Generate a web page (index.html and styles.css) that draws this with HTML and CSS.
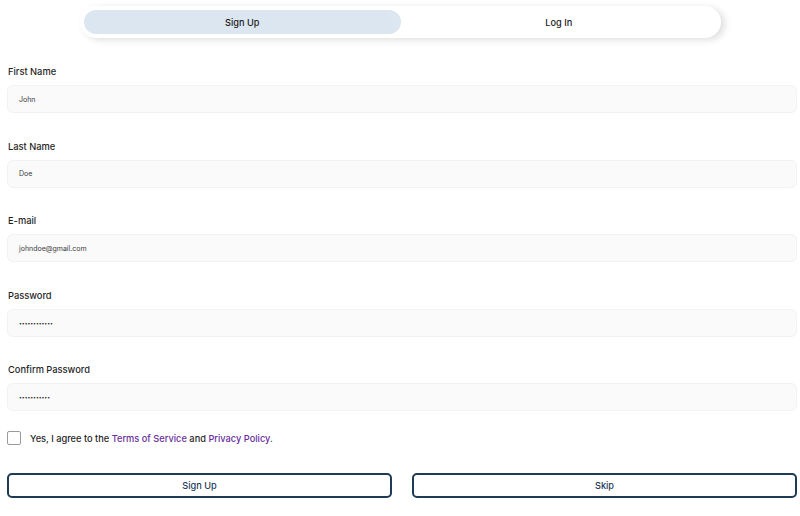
FILE: index.html
```html
<!DOCTYPE html>
<html lang="en">
<head>
<meta charset="utf-8">
<title>Sign Up</title>
<link rel="stylesheet" href="styles.css">
</head>
<body>
<div class="page">
  <div class="tabs">
    <div class="tab active">Sign Up</div>
    <div class="tab">Log In</div>
  </div>
  <form class="form">
    <div class="field">
      <label class="label">First Name</label>
      <div class="input">John</div>
    </div>
    <div class="field">
      <label class="label">Last Name</label>
      <div class="input">Doe</div>
    </div>
    <div class="field">
      <label class="label">E-mail</label>
      <div class="input">johndoe@gmail.com</div>
    </div>
    <div class="field">
      <label class="label">Password</label>
      <div class="input dots">••••••••••••</div>
    </div>
    <div class="field">
      <label class="label">Confirm Password</label>
      <div class="input dots">•••••••••••</div>
    </div>
    <div class="agree">
      <span class="checkbox"></span>
      <span>Yes, I agree to the <a class="link">Terms of Service</a> and <a class="link">Privacy Policy</a>.</span>
    </div>
    <div class="buttons">
      <div class="btn">Sign Up</div>
      <div class="btn">Skip</div>
    </div>
  </form>
</div>
</body>
</html>
```
FILE: styles.css
```css
* { box-sizing: border-box; }
html, body { margin: 0; padding: 0; background: #fff; }
body {
  font-family: Inter, "Noto Sans", sans-serif;
  color: #1f1f1f;
}
.page {
  width: 800px;
  padding: 6px 3px 0 7px;
}
.tabs {
  width: 641px;
  height: 32px;
  margin: 0 auto 0 73px;
  padding: 4px;
  display: flex;
  border-radius: 16px;
  background: #fff;
  box-shadow: 4px 2px 7px rgba(0,0,0,0.13);
}
.tab {
  flex: 1;
  display: flex;
  align-items: center;
  justify-content: center;
  font-size: 9.2px;
  font-weight: 500;
  color: #1a1a1a;
  border-radius: 12px;
}
.tab.active { background: #dce6f0; }
.form {
  margin-top: 28px;
  display: flex;
  flex-direction: column;
}
.field {
  display: flex;
  flex-direction: column;
  margin-bottom: 27.5px;
}
.label {
  display: block;
  height: 12px;
  line-height: 12px;
  font-size: 9.3px;
  font-weight: 500;
  color: #1f1f1f;
  padding-left: 1px;
  margin-bottom: 7px;
}
.input {
  height: 28px;
  display: flex;
  align-items: center;
  padding-left: 11px;
  background: #fafafa;
  border: 1px solid #f2f2f2;
  border-radius: 6px;
  font-size: 7px;
  color: #3a3a3a;
}
.input.dots { font-size: 5px; letter-spacing: 0; color: #222; }
.agree {
  margin-top: -7.5px;
  display: flex;
  align-items: center;
  gap: 9px;
  font-size: 9.25px;
  font-weight: 500;
  color: #1f1f1f;
}
.checkbox {
  width: 14px;
  height: 14px;
  border: 1px solid #9a9a9a;
  border-radius: 2px;
  background: #fff;
}
.link { color: #6a2e9c; }
.buttons {
  margin-top: 28px;
  display: flex;
  gap: 20px;
}
.btn {
  flex: 1;
  height: 25px;
  display: flex;
  align-items: center;
  justify-content: center;
  border: 2px solid #1d3a57;
  border-radius: 5px;
  font-size: 9.2px;
  font-weight: 500;
  color: #1d3a57;
}
```
